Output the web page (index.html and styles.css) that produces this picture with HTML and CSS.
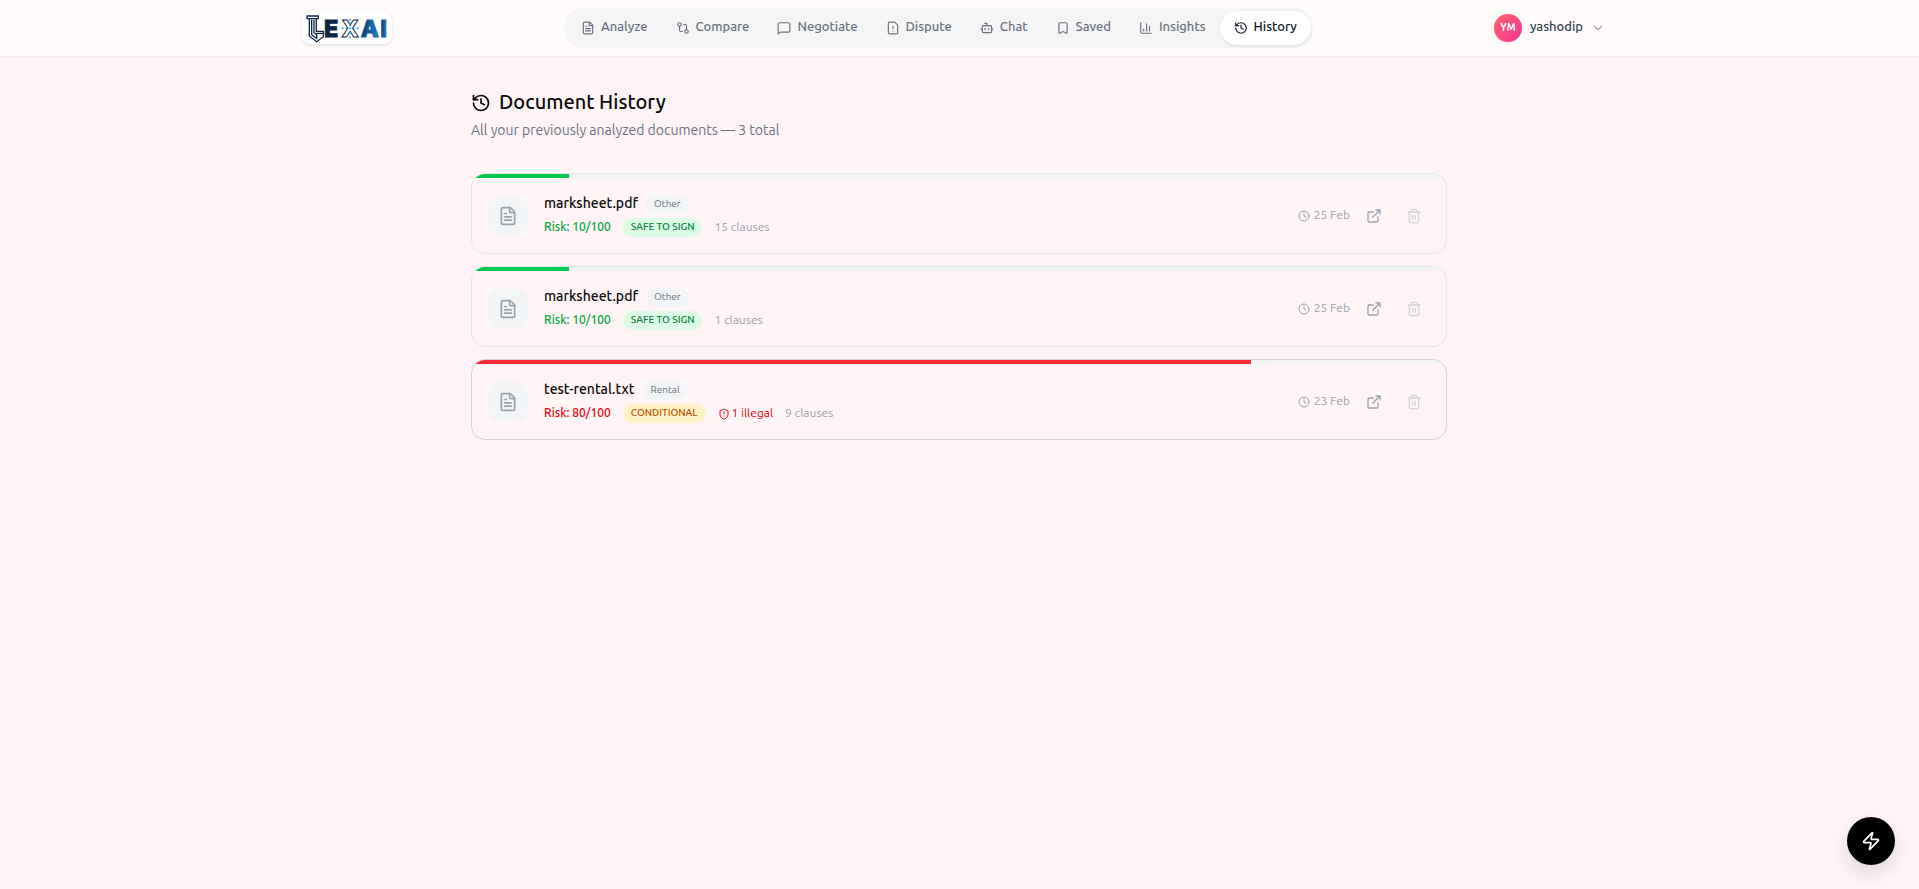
FILE: index.html
```html
<!DOCTYPE html>
<html lang="en">
<head>
<meta charset="utf-8">
<meta name="viewport" content="width=device-width, initial-scale=1">
<title>Document History</title>
<link rel="stylesheet" href="styles.css">
</head>
<body>
<svg class="sprite" aria-hidden="true">
  <symbol id="file-text" viewBox="0 0 24 24"><path d="M6 22a2 2 0 0 1-2-2V4a2 2 0 0 1 2-2h8a2.4 2.4 0 0 1 1.704.706l3.588 3.588A2.4 2.4 0 0 1 20 8v12a2 2 0 0 1-2 2z"/><path d="M14 2v5a1 1 0 0 0 1 1h5M10 9H8M16 13H8M16 17H8"/></symbol>
  <symbol id="compare" viewBox="0 0 24 24"><circle cx="18" cy="18" r="3"/><circle cx="6" cy="6" r="3"/><path d="M13 6h3a2 2 0 0 1 2 2v7M11 18H8a2 2 0 0 1-2-2V9"/></symbol>
  <symbol id="message" viewBox="0 0 24 24"><path d="M22 17a2 2 0 0 1-2 2H6.828a2 2 0 0 0-1.414.586l-2.202 2.202A.71.71 0 0 1 2 21.286V5a2 2 0 0 1 2-2h16a2 2 0 0 1 2 2z"/></symbol>
  <symbol id="file-alert" viewBox="0 0 24 24"><path d="M6 22a2 2 0 0 1-2-2V4a2 2 0 0 1 2-2h8a2.4 2.4 0 0 1 1.704.706l3.588 3.588A2.4 2.4 0 0 1 20 8v12a2 2 0 0 1-2 2z"/><path d="M12 9v4M12 17h.01"/></symbol>
  <symbol id="bot" viewBox="0 0 24 24"><path d="M12 8V4H8"/><rect width="16" height="12" x="4" y="8" rx="2"/><path d="M2 14h2M20 14h2M15 13v2M9 13v2"/></symbol>
  <symbol id="bookmark" viewBox="0 0 24 24"><path d="M17 3a2 2 0 0 1 2 2v15a1 1 0 0 1-1.496.868l-4.512-2.578a2 2 0 0 0-1.984 0l-4.512 2.578A1 1 0 0 1 5 20V5a2 2 0 0 1 2-2z"/></symbol>
  <symbol id="chart" viewBox="0 0 24 24"><path d="M3 3v16a2 2 0 0 0 2 2h16M18 17V9M13 17V5M8 17v-3"/></symbol>
  <symbol id="history" viewBox="0 0 24 24"><path d="M3 12a9 9 0 1 0 9-9 9.75 9.75 0 0 0-6.74 2.74L3 8"/><path d="M3 3v5h5M12 7v5l4 2"/></symbol>
  <symbol id="chevron" viewBox="0 0 24 24"><path d="m6 9 6 6 6-6"/></symbol>
  <symbol id="clock" viewBox="0 0 24 24"><circle cx="12" cy="12" r="10"/><path d="M12 6v6l4 2"/></symbol>
  <symbol id="external" viewBox="0 0 24 24"><path d="M15 3h6v6M10 14 21 3M18 13v6a2 2 0 0 1-2 2H5a2 2 0 0 1-2-2V8a2 2 0 0 1 2-2h6"/></symbol>
  <symbol id="trash" viewBox="0 0 24 24"><path d="M10 11v6M14 11v6M19 6v14a2 2 0 0 1-2 2H7a2 2 0 0 1-2-2V6M3 6h18M8 6V4a2 2 0 0 1 2-2h4a2 2 0 0 1 2 2v2"/></symbol>
  <symbol id="shield" viewBox="0 0 24 24"><path d="M20 13c0 5-3.5 7.5-7.66 8.95a1 1 0 0 1-.67-.01C7.5 20.5 4 18 4 13V6a1 1 0 0 1 1-1c2 0 4.500-1.200 6.240-2.720a1.170 1.170 0 0 1 1.520 0C14.510 3.810 17 5 19 5a1 1 0 0 1 1 1z"/><path d="M12 8v4M12 16h.01"/></symbol>
  <symbol id="zap" viewBox="0 0 24 24"><path d="M4 14a1 1 0 0 1-.78-1.63l9.900-10.200a.5.5 0 0 1 .86.460l-1.920 6.020A1 1 0 0 0 13 10h7a1 1 0 0 1 .78 1.630l-9.900 10.200a.5.5 0 0 1-.86-.460l1.920-6.020A1 1 0 0 0 11 14z"/></symbol>
</svg>

<header class="topbar">
  <div class="topbar-inner">
    <a class="logo" href="#" aria-label="LexAI home">
      <svg viewBox="0 0 270 96" aria-hidden="true">
        <defs>
          <linearGradient id="blue" x1="0" y1="0" x2="1" y2="0"><stop offset="0" stop-color="#0b2d5c"/><stop offset="1" stop-color="#2387cb"/></linearGradient>
        </defs>
        <g class="pillar">
          <path d="M15 12h34v8H15zM22 22v50l22 17 20-15V58H43V22M29 23v45l15 11V64h18M36 23v39l8 6"/>
        </g>
        <text class="letter" x="66" y="74">E</text>
        <text class="letter letter-outline" x="118" y="74">X</text>
        <g class="sparks">
          <circle cx="144" cy="23" r="3"/><circle cx="144" cy="76" r="3"/><circle cx="122" cy="49" r="3"/><circle cx="167" cy="49" r="3"/><circle cx="144" cy="35" r="3"/><circle cx="144" cy="63" r="3"/><circle cx="133" cy="49" r="3"/><circle cx="155" cy="49" r="3"/><circle cx="144" cy="49" r="3"/>
        </g>
        <text class="letter letter-blue" x="176" y="74">A</text>
        <text class="letter letter-blue" x="235" y="74">I</text>
      </svg>
    </a>
    <nav class="nav" aria-label="Main">
      <a class="nav-item" href="#"><svg class="icon"><use href="#file-text"/></svg><span>Analyze</span></a>
      <a class="nav-item" href="#"><svg class="icon"><use href="#compare"/></svg><span>Compare</span></a>
      <a class="nav-item" href="#"><svg class="icon"><use href="#message"/></svg><span>Negotiate</span></a>
      <a class="nav-item" href="#"><svg class="icon"><use href="#file-alert"/></svg><span>Dispute</span></a>
      <a class="nav-item" href="#"><svg class="icon"><use href="#bot"/></svg><span>Chat</span></a>
      <a class="nav-item" href="#"><svg class="icon"><use href="#bookmark"/></svg><span>Saved</span></a>
      <a class="nav-item" href="#"><svg class="icon"><use href="#chart"/></svg><span>Insights</span></a>
      <a class="nav-item nav-item-active" href="#" aria-current="page"><svg class="icon"><use href="#history"/></svg><span>History</span></a>
    </nav>
    <button class="user" type="button">
      <span class="avatar">YM</span>
      <span class="user-name">yashodip</span>
      <svg class="icon"><use href="#chevron"/></svg>
    </button>
  </div>
</header>

<main class="page">
  <h1 class="title"><svg class="icon"><use href="#history"/></svg><span>Document History</span></h1>
  <p class="subtitle">All your previously analyzed documents — 3 total</p>

  <ul class="cards">
    <li class="card">
      <div class="meter"><div class="meter-fill meter-safe" style="width: 10%"></div></div>
      <div class="card-body">
        <span class="doc"><svg class="icon"><use href="#file-text"/></svg></span>
        <div class="info">
          <div class="row row-name"><h2 class="name">marksheet.pdf</h2><span class="tag">Other</span></div>
          <div class="row row-meta"><span class="risk risk-safe">Risk: 10/100</span><span class="tag tag-safe">SAFE TO SIGN</span><span class="clauses">15 clauses</span></div>
        </div>
        <div class="actions">
          <span class="date"><svg class="icon"><use href="#clock"/></svg><time>25 Feb</time></span>
          <button class="action" type="button" aria-label="Open"><svg class="icon"><use href="#external"/></svg></button>
          <button class="action action-delete" type="button" aria-label="Delete"><svg class="icon"><use href="#trash"/></svg></button>
        </div>
      </div>
    </li>
    <li class="card">
      <div class="meter"><div class="meter-fill meter-safe" style="width: 10%"></div></div>
      <div class="card-body">
        <span class="doc"><svg class="icon"><use href="#file-text"/></svg></span>
        <div class="info">
          <div class="row row-name"><h2 class="name">marksheet.pdf</h2><span class="tag">Other</span></div>
          <div class="row row-meta"><span class="risk risk-safe">Risk: 10/100</span><span class="tag tag-safe">SAFE TO SIGN</span><span class="clauses">1 clauses</span></div>
        </div>
        <div class="actions">
          <span class="date"><svg class="icon"><use href="#clock"/></svg><time>25 Feb</time></span>
          <button class="action" type="button" aria-label="Open"><svg class="icon"><use href="#external"/></svg></button>
          <button class="action action-delete" type="button" aria-label="Delete"><svg class="icon"><use href="#trash"/></svg></button>
        </div>
      </div>
    </li>
    <li class="card card-hover">
      <div class="meter"><div class="meter-fill meter-danger" style="width: 80%"></div></div>
      <div class="card-body">
        <span class="doc"><svg class="icon"><use href="#file-text"/></svg></span>
        <div class="info">
          <div class="row row-name"><h2 class="name">test-rental.txt</h2><span class="tag">Rental</span></div>
          <div class="row row-meta"><span class="risk risk-danger">Risk: 80/100</span><span class="tag tag-warn">CONDITIONAL</span><span class="illegal"><svg class="icon"><use href="#shield"/></svg><span>1 illegal</span></span><span class="clauses">9 clauses</span></div>
        </div>
        <div class="actions">
          <span class="date"><svg class="icon"><use href="#clock"/></svg><time>23 Feb</time></span>
          <button class="action" type="button" aria-label="Open"><svg class="icon"><use href="#external"/></svg></button>
          <button class="action action-delete" type="button" aria-label="Delete"><svg class="icon"><use href="#trash"/></svg></button>
        </div>
      </div>
    </li>
  </ul>
</main>

<button class="fab" type="button" aria-label="Quick actions"><svg class="icon"><use href="#zap"/></svg></button>
</body>
</html>
```
FILE: styles.css
```css
* { box-sizing: border-box; }

body {
  margin: 0;
  min-height: 100vh;
  background: #fff5f6;
  color: #0a0a0a;
  font-family: Ubuntu, "Noto Sans", sans-serif;
  font-size: 14px;
  line-height: 20px;
}

h1, h2, p, ul { margin: 0; padding: 0; }
ul { list-style: none; }
a { color: inherit; text-decoration: none; }
button { border: 0; padding: 0; background: none; color: inherit; font: inherit; cursor: pointer; }

.sprite { display: none; }

.icon {
  display: block;
  flex: none;
  width: 14px;
  height: 14px;
  fill: none;
  stroke: currentColor;
  stroke-width: 2;
  stroke-linecap: round;
  stroke-linejoin: round;
}

/* Header */
.topbar { background: #fffbfb; border-bottom: 1px solid #f5e9eb; }

.topbar-inner {
  display: flex;
  align-items: center;
  justify-content: space-between;
  max-width: 1315px;
  height: 56px;
  margin: 0 auto;
}

.logo {
  width: 90px;
  height: 32px;
  border-radius: 8px;
  background: #fff;
  box-shadow: 0 1px 3px rgba(0, 0, 0, 0.12);
}
.logo svg { display: block; width: 100%; height: 100%; }
.pillar { fill: none; stroke: #14294a; stroke-width: 4; }
.letter { font-family: Inter, sans-serif; font-size: 70px; font-weight: 800; fill: #0d2645; stroke: #0d2645; stroke-width: 3; }
.letter-outline { fill: #fff; stroke: #14294a; }
.letter-blue { fill: url(#blue); stroke: #1763a5; }
.sparks { fill: #2f9be8; }

.nav {
  display: flex;
  padding: 3px;
  border-radius: 20px;
  background: #f5f5f5;
}
.nav-item {
  display: flex;
  align-items: center;
  gap: 6px;
  height: 34px;
  padding: 0 14px;
  border-radius: 17px;
  color: #6a7282;
  font-size: 13px;
  font-weight: 500;
}
.nav-item .icon { stroke-width: 2; }
.nav-item span { padding-bottom: 4px; }
.nav-item-active {
  background: #fff;
  color: #101828;
  box-shadow: 0 1px 3px rgba(0, 0, 0, 0.1);
}

.user { display: flex; align-items: center; gap: 8px; padding: 0 12px 0 8px; color: #364153; }
.user .icon { color: #99a1af; }
.user-name { padding-bottom: 4px; font-size: 13px; font-weight: 500; }
.avatar {
  width: 28px;
  border-radius: 50%;
  background: linear-gradient(135deg, #ff6467, #f6339a);
  color: #fff;
  font-size: 10px;
  font-weight: 700;
  line-height: 28px;
  text-align: center;
  box-shadow: 0 1px 2px rgba(0, 0, 0, 0.1);
}

/* Page */
.page { max-width: 1025px; margin: 0 auto; padding: 32px 25px 32px 24px; }

.title {
  display: flex;
  align-items: center;
  gap: 8px;
  height: 28px;
  font-size: 20px;
  font-weight: 500;
  line-height: 26px;
}
.title span { padding-bottom: 2px; }
.title .icon { width: 20px; height: 20px; }
.subtitle { margin-top: 3px; color: #6a7282; }

.cards { display: grid; gap: 12px; margin-top: 33px; }
.card {
  overflow: hidden;
  border: 1px solid #e5e7eb;
  border-radius: 14px;
}
.card-hover { border-color: #d1d5dc; }

.meter { height: 4px; background: #f3f4f6; }
.meter-fill { height: 100%; }
.meter-safe { background: #00c950; }
.meter-danger { background: #fb2c36; }

.card-body { display: flex; align-items: center; gap: 16px; padding: 16px; }
.doc {
  display: grid;
  place-items: center;
  flex: none;
  width: 40px;
  height: 40px;
  border-radius: 12px;
  background: #f3f4f6;
  color: #99a1af;
}
.doc .icon { width: 20px; height: 20px; }

.info { display: grid; gap: 4px; flex: 1; min-width: 0; }
.row { display: flex; align-items: center; font-size: 12px; }
.row-name { height: 20px; gap: 8px; }
.row-meta { height: 19px; gap: 12px; }
.name { padding-bottom: 2px; font-size: 14px; font-weight: 500; line-height: 20px; }
.tag {
  padding: 0 8px 2px;
  border-radius: 10px;
  background: #f3f4f6;
  color: #6a7282;
  font-size: 10px;
  line-height: 17px;
}
.tag-safe { background: #dcfce7; color: #008236; font-weight: 500; }
.tag-warn { background: #fef3c6; color: #bb4d00; font-weight: 500; }
.risk { font-weight: 500; }
.risk, .clauses, .illegal span, .date time { padding-bottom: 2px; }
.risk-safe { color: #00a63e; }
.risk-danger, .illegal { color: #e7000b; }
.illegal { display: flex; align-items: center; gap: 2px; }
.illegal .icon { width: 12px; height: 12px; }
.clauses, .date { color: #99a1af; }

.actions { display: flex; align-items: center; gap: 8px; }
.date { display: flex; align-items: center; gap: 4px; font-size: 12px; }
.date .icon { width: 12px; height: 12px; }
.action { display: grid; place-items: center; width: 32px; height: 32px; color: #99a1af; }
.action .icon { width: 16px; height: 16px; }
.action-delete { color: #d1d5dc; }

/* Floating button */
.fab {
  position: fixed;
  right: 24px;
  bottom: 24px;
  display: grid;
  place-items: center;
  width: 48px;
  height: 48px;
  border-radius: 50%;
  background: #000;
  color: #fff;
  box-shadow: 0 8px 20px rgba(0, 0, 0, 0.12);
}
.fab .icon { width: 20px; height: 20px; }
```
